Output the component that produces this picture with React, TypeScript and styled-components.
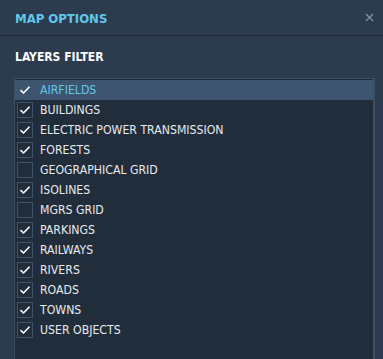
import { useState } from "react";
import styled, { createGlobalStyle } from "styled-components";

type Layer = {
  id: string;
  title: string;
  checked: boolean;
};

const LAYERS: Layer[] = [
  { id: "airfields", title: "AIRFIELDS", checked: true },
  { id: "buildings", title: "BUILDINGS", checked: true },
  { id: "power", title: "ELECTRIC POWER TRANSMISSION", checked: true },
  { id: "forests", title: "FORESTS", checked: true },
  { id: "geogrid", title: "GEOGRAPHICAL GRID", checked: false },
  { id: "isolines", title: "ISOLINES", checked: true },
  { id: "mgrs", title: "MGRS GRID", checked: false },
  { id: "parkings", title: "PARKINGS", checked: true },
  { id: "railways", title: "RAILWAYS", checked: true },
  { id: "rivers", title: "RIVERS", checked: true },
  { id: "roads", title: "ROADS", checked: true },
  { id: "towns", title: "TOWNS", checked: true },
  { id: "user", title: "USER OBJECTS", checked: true },
];

const GlobalStyle = createGlobalStyle`
  html, body {
    margin: 0;
    padding: 0;
    background: #2c3b4e;
  }
  body {
    font-family: "DejaVu Sans Condensed", "DejaVu Sans", "Liberation Sans", sans-serif;
    font-stretch: semi-condensed;
  }
`;

export default function App() {
  const [layers, setLayers] = useState<Layer[]>(LAYERS);
  const [selected, setSelected] = useState<string>("airfields");

  const toggle = (id: string) => {
    setSelected(id);
    setLayers(layers.map((l) => (l.id === id ? { ...l, checked: !l.checked } : l)));
  };

  return (
    <Window>
      <GlobalStyle />
      <Header>
        <Title>MAP OPTIONS</Title>
        <CloseBtn type="button" aria-label="close">
          <svg width="9" height="9" viewBox="0 0 9 9">
            <path d="M1 1L8 8M8 1L1 8" stroke="#7f93aa" strokeWidth="1.3" />
          </svg>
        </CloseBtn>
      </Header>
      <Body>
        <Section>LAYERS FILTER</Section>
        <List>
          {layers.map((item) => (
            <Row
              key={item.id}
              $active={selected === item.id}
              onClick={() => toggle(item.id)}
            >
              <Box>
                {item.checked && (
                  <svg width="12" height="10" viewBox="0 0 12 10">
                    <path
                      d="M1.5 5.2L4.5 8L10.5 1.8"
                      fill="none"
                      stroke="#ffffff"
                      strokeWidth="1.6"
                    />
                  </svg>
                )}
              </Box>
              <Label $active={selected === item.id}>{item.title}</Label>
            </Row>
          ))}
        </List>
      </Body>
    </Window>
  );
}

const Window = styled.div`
  width: 383px;
  height: 359px;
  background: #2c3b4e;
  overflow: hidden;
  display: flex;
  flex-direction: column;
`;

const Header = styled.div`
  height: 36px;
  box-sizing: border-box;
  border-bottom: 1px solid #1d2835;
  display: flex;
  align-items: center;
  justify-content: space-between;
  padding: 0 9px 0 15px;
`;

const Title = styled.div`
  color: #5ec8ec;
  font-size: 13px;
  font-weight: bold;
  padding-top: 1px;
`;

const CloseBtn = styled.button`
  background: none;
  border: none;
  padding: 0;
  width: 10px;
  height: 10px;
  display: flex;
  align-items: center;
  justify-content: center;
  cursor: pointer;
`;

const Body = styled.div`
  flex: 1;
  display: flex;
  flex-direction: column;
  padding: 14px 8px 0 14px;
`;

const Section = styled.div`
  color: #ffffff;
  font-size: 12px;
  font-weight: bold;
  margin-left: 1px;
  height: 14px;
  line-height: 14px;
  margin-bottom: 14px;
`;

const List = styled.div`
  flex: 1;
  background: #222d3b;
  border: 1px solid #3a4f68;
  border-right-width: 2px;
  border-bottom: none;
  padding-top: 1px;
  display: flex;
  flex-direction: column;
`;

const Row = styled.div<{ $active: boolean }>`
  height: 20px;
  display: flex;
  align-items: center;
  gap: 7px;
  padding-left: 2px;
  background: ${(p) => (p.$active ? "#3e556f" : "transparent")};
  cursor: pointer;
`;

const Box = styled.div`
  width: 16px;
  height: 16px;
  box-sizing: border-box;
  border: 1px solid #3d526b;
  display: flex;
  align-items: center;
  justify-content: center;
`;

const Label = styled.span<{ $active: boolean }>`
  color: ${(p) => (p.$active ? "#5ec8ec" : "#e6eaef")};
  font-size: 12.2px;
  white-space: nowrap;
`;
